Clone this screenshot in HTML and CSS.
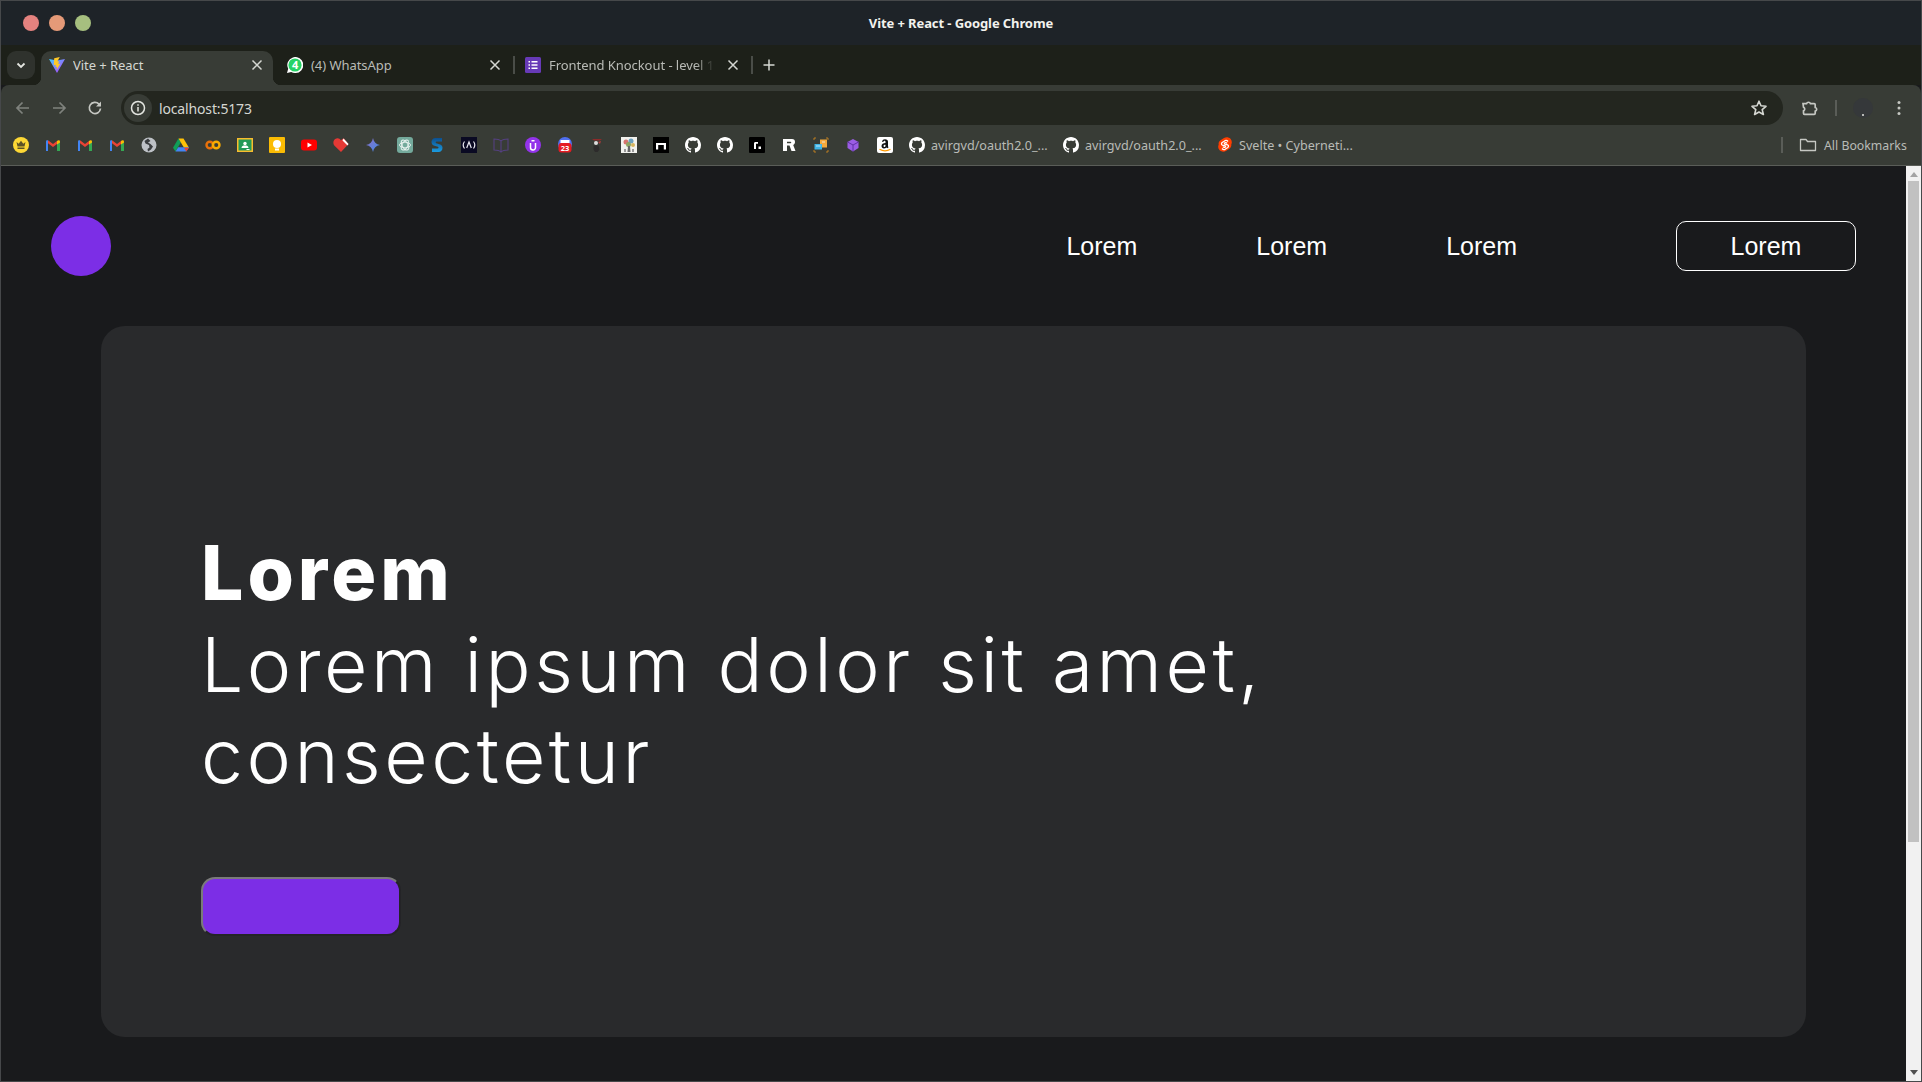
FILE: index.html
```html
<!DOCTYPE html>
<html lang="en">
<head>
<meta charset="utf-8">
<title>Vite + React</title>
<link rel="stylesheet" href="styles.css">
</head>
<body>
<svg class="defs" width="0" height="0" aria-hidden="true">
  <symbol id="gh" viewBox="0 0 16 16"><path fill="#fff" d="M8 0C3.58 0 0 3.58 0 8c0 3.54 2.29 6.53 5.47 7.59.4.07.55-.17.55-.38 0-.19-.01-.82-.01-1.49-2.01.37-2.53-.49-2.69-.94-.09-.23-.48-.94-.82-1.13-.28-.15-.68-.52-.01-.53.63-.01 1.08.58 1.23.82.72 1.21 1.87.87 2.33.66.07-.52.28-.87.51-1.07-1.78-.2-3.64-.89-3.64-3.95 0-.87.31-1.59.82-2.15-.08-.2-.36-1.02.08-2.12 0 0 .67-.21 2.2.82.64-.18 1.32-.27 2-.27.68 0 1.36.09 2 .27 1.53-1.04 2.2-.82 2.2-.82.44 1.1.16 1.92.08 2.12.51.56.82 1.27.82 2.15 0 3.07-1.87 3.75-3.65 3.95.29.25.54.73.54 1.48 0 1.07-.01 1.93-.01 2.2 0 .21.15.46.55.38A8.013 8.013 0 0016 8c0-4.42-3.58-8-8-8z"/></symbol>
  <symbol id="gm" viewBox="0 0 16 16">
    <path fill="#4285f4" d="M1 14V4.200c0-.5.8-1.400 2-.9v10.700z"/><path fill="#34a853" d="M12 14V6.500l3-2V14z"/>
    <path fill="#ea4335" d="M3 3.300l5 3.800 4-3v2.900L8 9.900 3 6.200z"/><path fill="#fbbc04" d="M12 4.100c1.300-1.300 3-.7 3 .5v.9l-3 2z"/>
  </symbol>
  <symbol id="x" viewBox="0 0 16 16"><path d="M3.500 3.500l9 9m0-9l-9 9" fill="none" stroke="#d5d7d2" stroke-width="1.500"/></symbol>
</svg>
<div class="window">
  <header class="titlebar">
    <div class="lights"><span class="light red"></span><span class="light orange"></span><span class="light green"></span></div>
    <div class="wintitle">Vite + React - Google Chrome</div>
    <div></div>
  </header>

  <div class="tabstrip">
    <div class="tabsearch"><svg class="i12" viewBox="0 0 12 12"><path d="M2.500 4.500L6 8l3.500-3.500" fill="none" stroke="#e3e5e0" stroke-width="1.800"/></svg></div>
    <div class="tab active">
      <svg class="i16" viewBox="0 0 16 16"><defs><linearGradient id="vp" x1="0" y1="0" x2="1" y2="1"><stop offset="0" stop-color="#41d1ff"/><stop offset="1" stop-color="#bd34fe"/></linearGradient></defs><path fill="url(#vp)" d="M0 2l8 1.400L16 2 8 16z"/><path fill="#ffc928" d="M10.800 0L5.200 1.200l-.4 7 2-.4-.3 2.200 1.500-.3-.4 3.300 3.800-6.500-2.200.4.900-2.700-1.800.3z"/></svg>
      <span class="tabtitle">Vite + React</span>
      <svg class="i16" viewBox="0 0 16 16"><use href="#x"/></svg>
    </div>
    <span class="tabsep clear"></span>
    <div class="tab">
      <svg class="i16" viewBox="0 0 16 16"><path fill="#fff" d="M0 16l1.200-4.300A8 8 0 118 16a8 8 0 01-3.800-1z"/><circle cx="8" cy="8" r="6.600" fill="#25d366"/><text x="8" y="12" class="wa">4</text></svg>
      <span class="tabtitle">(4) WhatsApp</span>
      <svg class="i16" viewBox="0 0 16 16"><use href="#x"/></svg>
    </div>
    <span class="tabsep"></span>
    <div class="tab">
      <svg class="i16" viewBox="0 0 16 16"><rect width="16" height="16" rx="1.500" fill="#673ab7"/><path d="M3.500 4h1.500v1.500H3.500zm0 3.300h1.500v1.500H3.500zm0 3.200h1.500V12H3.500zM6.500 4h6v1.500h-6zm0 3.300h6v1.500h-6zm0 3.200h6V12h-6z" fill="#fff"/></svg>
      <span class="tabtitle fade">Frontend Knockout - level 1 (</span>
      <svg class="i16" viewBox="0 0 16 16"><use href="#x"/></svg>
    </div>
    <span class="tabsep"></span>
    <svg class="i16 newtab" viewBox="0 0 16 16"><path d="M8 2.500v11M2.500 8h11" stroke="#d5d7d2" stroke-width="1.500" fill="none"/></svg>
  </div>

  <div class="toolbar">
    <svg class="i18" viewBox="0 0 18 18"><path d="M15 9H3.500M8.500 3.500L3 9l5.500 5.500" fill="none" stroke="#7f827d" stroke-width="1.700"/></svg>
    <svg class="i18" viewBox="0 0 18 18"><path d="M3 9h11.500M9.500 3.500L15 9l-5.500 5.500" fill="none" stroke="#7f827d" stroke-width="1.700"/></svg>
    <svg class="i18" viewBox="0 0 18 18"><path d="M14.500 9.500a5.600 5.600 0 11-1.500-4.400l1.500 1.500" fill="none" stroke="#c6c8c3" stroke-width="1.700"/><path d="M15 2.500V7.500H10z" fill="#c6c8c3"/></svg>
    <div class="omnibox">
      <span class="siteinfo"><svg class="i16" viewBox="0 0 16 16"><circle cx="8" cy="8" r="6.500" fill="none" stroke="#e3e5e0" stroke-width="1.500"/><path d="M8 7v4.500M8 4.300v1.500" stroke="#e3e5e0" stroke-width="1.500"/></svg></span>
      <span class="url">localhost:5173</span>
      <svg class="i18" viewBox="0 0 18 18"><path d="M9 2.200l2 4.600 5 .5-3.800 3.300 1.200 4.900L9 13l-4.400 2.500 1.200-4.900L2 7.300l5-.5z" fill="none" stroke="#d5d7d2" stroke-width="1.600" stroke-linejoin="round"/></svg>
    </div>
    <svg class="i18 puzzle" viewBox="0 0 18 18"><path d="M3 4.700h3.500a2.100 2.100 0 014 0h3.700a1 1 0 011 1v2.800a1.900 1.900 0 010 3.700v2.100a1 1 0 01-1 1H4.500a1 1 0 01-1-1v-2.400a2 2 0 000-3.700z" fill="none" stroke="#c6c8c3" stroke-width="1.700"/></svg>
    <span class="toolsep"></span>
    <span class="avatar"><span class="avatardot"></span></span>
    <svg class="dots" viewBox="0 0 4 16"><circle cx="2" cy="2.500" r="1.500"/><circle cx="2" cy="8" r="1.500"/><circle cx="2" cy="13.500" r="1.500"/></svg>
  </div>

  <nav class="bookmarks">
    <svg class="i16" viewBox="0 0 16 16"><circle cx="8" cy="8" r="8" fill="#fdd835"/><path d="M3.500 5l2.200 1.700L8 3.800l2.300 2.900L12.500 5l-1 4.500h-7zM4.500 10.500h7V12h-7z" fill="#5d5326"/></svg>
    <svg class="i16" viewBox="0 0 16 16"><use href="#gm"/></svg>
    <svg class="i16" viewBox="0 0 16 16"><use href="#gm"/></svg>
    <svg class="i16" viewBox="0 0 16 16"><use href="#gm"/></svg>
    <svg class="i16" viewBox="0 0 16 16"><circle cx="8" cy="8" r="7.500" fill="#bdc1c6"/><path d="M7 1.500L3.500 4l1 2.500L8 8l.5 2.500-2 1.500.5 2.500 3-2 2-3-2.500-2.500L7 5.500 9.500 4z" fill="#3a3d3f"/></svg>
    <svg class="i16" viewBox="0 0 16 16"><path fill="#0f9d58" d="M5.400 1.500L0 10.700l2.500 3.800 5.400-9.300z"/><path fill="#ffc107" d="M5.500 1.500h5l5.500 9.200h-5z"/><path fill="#4285f4" d="M2.500 14.500l2.700-4.300h10.800l-2.700 4.300z"/><path fill="#ea4335" d="M16 10.700l-2.700 3.800-2.300-3.800z"/></svg>
    <svg class="i16" viewBox="0 0 16 16"><g fill="none" stroke-width="2.400"><circle cx="4.800" cy="8" r="3.300" stroke="#e8710a"/><circle cx="11.200" cy="8" r="3.300" stroke="#f9ab00"/></g></svg>
    <svg class="i16" viewBox="0 0 16 16"><rect y="1" width="16" height="14" fill="#f9bd2d"/><rect x="1.500" y="2.500" width="13" height="11" fill="#249a58"/><circle cx="8" cy="6.500" r="1.700" fill="#fff"/><path d="M4.500 11c0-2 1.500-2.500 3.500-2.500s3.500.5 3.500 2.500zM9.500 12h3v1h-3z" fill="#fff"/></svg>
    <svg class="i16" viewBox="0 0 16 16"><rect width="16" height="16" rx="1" fill="#fbbc04"/><circle cx="8" cy="7" r="4" fill="#fff"/><rect x="6" y="11.500" width="4" height="2" fill="#fff"/></svg>
    <svg class="i16" viewBox="0 0 16 16"><rect y="2.500" width="16" height="11" rx="3" fill="#f00"/><path d="M6.500 5.500L11 8l-4.500 2.500z" fill="#fff"/></svg>
    <svg class="i16" viewBox="0 0 16 16"><path d="M8 15L1.300 8.500C-.5 6.500.3 2 3.500 1.500 5.500 1 7 2 8 3.500 9 2 10 1.500 11 1.500l4.500 5.500z" fill="#e53935"/><path d="M10.500 1.500l5 5.500-1 1.500-5-5z" fill="#fff"/></svg>
    <svg class="i16" viewBox="0 0 16 16"><defs><linearGradient id="gem" x1="0" y1="0" x2="1" y2="1"><stop offset="0" stop-color="#8e6fc9"/><stop offset="1" stop-color="#3f8ce8"/></linearGradient></defs><path d="M8 1c.8 4 3 6.200 7 7-4 .8-6.200 3-7 7-.8-4-3-6.200-7-7 4-.8 6.200-3 7-7z" fill="url(#gem)"/></svg>
    <svg class="i16" viewBox="0 0 16 16"><rect width="16" height="16" rx="3" fill="#74aa9c"/><g fill="none" stroke="#e8f2ef" stroke-width=".9"><ellipse cx="8" cy="8" rx="5.500" ry="2.800"/><ellipse cx="8" cy="8" rx="5.500" ry="2.800" transform="rotate(60 8 8)"/><ellipse cx="8" cy="8" rx="5.500" ry="2.800" transform="rotate(120 8 8)"/></g></svg>
    <svg class="i16" viewBox="0 0 16 16"><defs><linearGradient id="sb" x1="0" y1="0" x2="0" y2="1"><stop offset="0" stop-color="#0c4f8f"/><stop offset="1" stop-color="#1a9be0"/></linearGradient></defs><path d="M13 1H6.500C4 1 2.500 2.800 2.500 5c0 2 1.200 3.200 3 3.700l3.500 1c.8.300.8 1.800-.5 1.800H3V15h6.500c2.500 0 4-1.800 4-4.200 0-2-1.200-3.100-3-3.600l-3.300-1c-.8-.3-.7-1.700.4-1.700H13z" fill="url(#sb)"/></svg>
    <svg class="i16" viewBox="0 0 16 16"><rect width="16" height="16" fill="#0a0a23"/><path d="M3.500 4.500C2 6.500 2 9.500 3.500 11.500M12.500 4.500c1.500 2 1.500 5 0 7M5.700 11L8 5l2.300 6" fill="none" stroke="#e8e8f0" stroke-width="1.200"/></svg>
    <svg class="i16" viewBox="0 0 16 16"><path d="M8 4C6.500 2.500 4 2 1 2v11c3 0 5.500.5 7 2 1.500-1.500 4-2 7-2V2c-3 0-5.500.5-7 2zm0 0v11" fill="none" stroke="#54407f" stroke-width="1.100"/></svg>
    <svg class="i16" viewBox="0 0 16 16"><circle cx="8" cy="8" r="8" fill="#9333ea"/><path d="M5.500 6v4.500a2.500 2.500 0 005 0V6M6.500 3.700h3" fill="none" stroke="#fff" stroke-width="1.500"/></svg>
    <svg class="i16" viewBox="0 0 16 16"><circle cx="8" cy="7" r="7" fill="#4f6ff0"/><rect x="3.500" y="3" width="9" height="3" fill="#fff"/><rect x="1.500" y="6" width="13" height="9.500" rx="3" fill="#e51c23"/><text x="8" y="14" class="cal">23</text></svg>
    <svg class="i16" viewBox="0 0 16 16"><path d="M3 2h10l-2 1.500H5z" fill="#8e2a2a"/><circle cx="7" cy="6" r="2" fill="#ddd"/><path d="M4.500 8.500h5l1 4-2 2.500H6l-1.500-2.500z" fill="#2d2b2b"/><path d="M9 5l3-1-1 3z" fill="#b13a3a"/></svg>
    <svg class="i16" viewBox="0 0 16 16"><rect width="16" height="16" fill="#f2f2ee"/><circle cx="5" cy="5" r="2.500" fill="#d7746e"/><circle cx="10" cy="4" r="2.500" fill="#6ba0bf"/><circle cx="7.500" cy="7.500" r="2.500" fill="#8da565"/><circle cx="12" cy="8" r="2" fill="#d7b55e"/><path d="M7 9h2l.5 6h-3z" fill="#666"/><path d="M3 12h2v3H3zM11 12h2v3h-2z" fill="#999"/></svg>
    <svg class="i16" viewBox="0 0 16 16"><rect width="16" height="16" fill="#000"/><path d="M3 6h10v6.500h-2.200V8H5.200v4.500H3z" fill="#fff"/></svg>
    <svg class="i16" viewBox="0 0 16 16"><use href="#gh"/></svg>
    <svg class="i16" viewBox="0 0 16 16"><use href="#gh"/></svg>
    <svg class="i16" viewBox="0 0 16 16"><rect width="16" height="16" rx="1" fill="#000"/><path d="M5 12V6.500C5 5.500 5.700 5 6.500 5H9v1.800H7V12z" fill="#fff"/><rect x="9.500" y="9.500" width="2.500" height="2.500" fill="#fff"/></svg>
    <svg class="i16" viewBox="0 0 16 16"><path fill-rule="evenodd" d="M2 2h9c2 0 3 1.300 3 3 0 1.500-.7 2.500-1.800 2.900L14.500 14h-4l-2-5.500H6V14H2zm4 2.800v1.500h3.500c1 0 1-1.500 0-1.500z" fill="#fff"/></svg>
    <svg class="i16" viewBox="0 0 16 16"><path d="M1 3V1h2M13 1h2v2M1 13v2h2M15 13v2h-2" fill="none" stroke="#d88a1c" stroke-width=".8"/><rect x="7" y="2.500" width="7" height="8" fill="#f4a93b"/><rect x="1.500" y="7" width="7.500" height="5.500" fill="#3fb5e8"/><path d="M3 9h4.500M9 5h3" stroke="#eaf6fb" stroke-width=".8"/></svg>
    <svg class="i16" viewBox="0 0 16 16"><path d="M8 2l5.500 3v6L8 14.500 2.500 11V5z" fill="#9b5de5"/><path d="M2.500 5L8 8l5.500-3M8 8v6.500" fill="none" stroke="#5a2ca0" stroke-width=".9"/></svg>
    <svg class="i16" viewBox="0 0 16 16"><rect width="16" height="16" rx="2" fill="#fff"/><path d="M5 4.700C5.300 3 6.500 2.200 8 2.200c2 0 3 1 3 2.500V9c0 .5.300.9.600 1.200L10.300 11.300 9.500 10.500c-.8.700-1.600 1-2.500 1-1.500 0-2.500-1-2.500-2.500 0-2 1.800-3 4-3V5c0-.8-.4-1.200-1-1.200s-1 .4-1.200 1.100zm3.500 3c-1.300 0-2 .5-2 1.300 0 .6.300 1 .9 1 .6 0 1.100-.5 1.100-1.300z" fill="#111"/><path d="M2.500 12.300c3.500 2 7.500 2 11 0" fill="none" stroke="#f90" stroke-width="1.100"/></svg>
    <span class="chip"><svg class="i16" viewBox="0 0 16 16"><use href="#gh"/></svg><span>avirgvd/oauth2.0_...</span></span>
    <span class="chip wide"><svg class="i16" viewBox="0 0 16 16"><use href="#gh"/></svg><span>avirgvd/oauth2.0_...</span></span>
    <span class="chip last"><svg class="i16" viewBox="0 0 16 16"><path d="M13.500 1.700c-1.800-1.700-4.500-2-6.500-.7L3.500 3.200C2 4.200 1.300 6 1.700 7.700c-.8 1.500-.7 3.500.4 4.900 1.500 2.200 4.500 2.800 6.800 1.400l3.500-2.200c1.500-1 2.200-2.800 1.900-4.500.9-1.700.7-3.700-.8-5.600z" fill="#ff3e00"/><path d="M11 4.500c-.8-1-2-1.300-3-.8L5.200 5.500c-1 .7-1 2.200.2 2.700l2.700.7c.8.300.6 1.300-.3 1.500-.8.200-1.500-.2-1.900-.8M5 11.500c.9 1 2.100 1.300 3.100.8l2.700-1.800c1-.7 1-2.200-.2-2.700l-2.700-.7c-.8-.3-.6-1.300.3-1.500.8-.2 1.500.2 1.900.8" fill="none" stroke="#fff" stroke-width="1.300"/></svg><span>Svelte • Cyberneti...</span></span>
    <span class="booksep"></span>
    <svg class="i18" viewBox="0 0 18 18"><path d="M1.500 3.500h5.500l1.500 2h8v9h-15z" fill="none" stroke="#c6c8c3" stroke-width="1.300" stroke-linejoin="round"/></svg>
    <span class="allbm">All Bookmarks</span>
  </nav>

  <div class="viewport">
    <main class="page">
      <div class="topnav">
        <span class="logo"></span>
        <div class="navlinks">
          <a class="navlink">Lorem</a>
          <a class="navlink">Lorem</a>
          <a class="navlink">Lorem</a>
          <button class="navbtn">Lorem</button>
        </div>
      </div>
      <section class="hero">
        <h1 class="headline"><strong class="headstrong">Lorem</strong><br>Lorem ipsum dolor sit amet,<br>consectetur</h1>
        <button class="cta"></button>
      </section>
    </main>
    <aside class="scrollbar">
      <span class="arrow up"></span>
      <span class="thumb"></span>
      <span class="track"></span>
      <span class="arrow down"></span>
    </aside>
  </div>
</div>
</body>
</html>
```
FILE: styles.css
```css
* { box-sizing: border-box; }
html, body { margin: 0; padding: 0; }
body { width: 1922px; height: 1082px; overflow: hidden; background: #46484a; padding: 1px; font-family: "Noto Sans", sans-serif; }
.defs { display: block; height: 0; }
.window { display: flex; flex-direction: column; width: 1920px; height: 1080px; background: #191a1c; }
.i12 { width: 12px; height: 12px; display: block; flex: none; }
.i16 { width: 16px; height: 16px; display: block; flex: none; }
.i18 { width: 18px; height: 18px; display: block; flex: none; }

.titlebar { height: 44px; flex: none; background: #1e2328; display: grid; grid-template-columns: 1fr auto 1fr; align-items: center; }
.lights { display: flex; gap: 10px; padding-left: 22px; }
.light { width: 16px; height: 16px; border-radius: 50%; }
.red { background: #e5827f; }
.orange { background: #e59a78; }
.green { background: #a6bf7f; }
.wintitle { color: #f2f2ee; font-size: 13px; font-weight: 700; letter-spacing: -.1px; }

.tabstrip { height: 40px; flex: none; background: #1d2019; padding: 6px 0 0 6px; display: flex; align-items: flex-start; }
.tabsearch { width: 28px; height: 28px; background: #2f322d; border-radius: 9px; margin-right: 6px; display: flex; align-items: center; justify-content: center; }
.tab { width: 232px; height: 34px; display: flex; align-items: center; gap: 8px; padding: 0 8px 6px 8px; color: #b9bbb6; font-size: 13px; letter-spacing: -.05px; border-radius: 10px 10px 0 0; }
.tab.active { background: #383c36; color: #d5d7d2; position: relative; }
.tab.active::before, .tab.active::after { content: ""; position: absolute; bottom: 0; width: 8px; height: 8px; }
.tab.active::before { left: -8px; background: radial-gradient(circle at 0 0, transparent 8px, #383c36 8.5px); }
.tab.active::after { right: -8px; background: radial-gradient(circle at 100% 0, transparent 8px, #383c36 8.5px); }
.tabtitle { flex: 1; white-space: nowrap; overflow: hidden; }
.fade { margin-right: 2px; -webkit-mask-image: linear-gradient(90deg, #000 88%, transparent 100%); mask-image: linear-gradient(90deg, #000 88%, transparent 100%); }
.wa { font: 700 11px "Noto Sans", sans-serif; fill: #fff; text-anchor: middle; }
.cal { font: 700 7.500px "Noto Sans", sans-serif; fill: #fff; text-anchor: middle; }
.tabsep { width: 2px; height: 18px; margin: 5px 2px 0; background: #4a4d48; flex: none; }
.tabsep.clear { background: transparent; }
.newtab { margin: 6px 0 0 6px; }

.toolbar { height: 40px; flex: none; background: #383c36; border-radius: 8px 8px 0 0; padding: 6px 20px 0 13px; display: flex; align-items: center; gap: 18px; }
.omnibox { flex: 1; height: 34px; background: #23261f; border-radius: 17px; margin-left: -1px; padding: 0 15px 0 3px; display: flex; align-items: center; gap: 7px; color: #d5d7d2; font-size: 14px; letter-spacing: -.15px; }
.siteinfo { width: 28px; height: 28px; border-radius: 50%; background: #383c36; display: flex; align-items: center; justify-content: center; }
.url { flex: 1; }
.puzzle { margin-left: -1px; }
.toolsep { width: 2px; height: 16px; background: #5a5d58; flex: none; margin-left: -1px; }
.avatar { width: 20px; height: 20px; border-radius: 50%; background: #35383a; margin-left: -2px; display: flex; align-items: flex-end; justify-content: center; padding-bottom: 2px; }
.avatardot { width: 2px; height: 2px; background: #e3e5e0; border-radius: 50%; }
.dots { width: 4px; height: 16px; fill: #c6c8c3; margin-left: 6px; flex: none; }

.bookmarks { height: 41px; flex: none; background: #383c36; border-bottom: 1px solid #5a5d58; padding: 0 15px 0 12px; display: flex; align-items: center; gap: 16px; }
.chip { display: flex; align-items: center; gap: 6px; color: #b9bbb6; font-size: 12.600px; white-space: nowrap; width: 138px; }
.chip.wide { width: 138px; }
.chip.last { width: 127px; }
.booksep { width: 2px; height: 16px; background: #5a5d58; margin-left: auto; flex: none; }
.allbm { color: #b9bbb6; font-size: 12.300px; white-space: nowrap; margin-left: -9px; width: 82px; }

.viewport { flex: 1; display: flex; min-height: 0; }
.page { flex: 1; min-width: 0; background: #191a1c; }
.topnav { display: flex; align-items: center; justify-content: space-between; padding: 50px; }
.logo { width: 60px; height: 60px; border-radius: 50%; background: #7c2ee6; }
.navlinks { display: flex; align-items: center; gap: 119px; }
.navlink { color: #fff; font: 25px "Liberation Sans", sans-serif; }
.navbtn { width: 180px; height: 50px; margin-left: 40px; background: transparent; border: 1.500px solid #fff; border-radius: 10px; color: #fff; font: 25px "Liberation Sans", sans-serif; }
.hero { margin: 0 100px; height: 711px; background: #292a2c; border-radius: 24px; padding: 201px 100px 0; }
.headline { margin: 0; color: #fff; font: 300 75px/91.500px "Inter", sans-serif; letter-spacing: 3.500px; }
.headstrong { font-weight: 800; letter-spacing: 4px; }
.cta { display: block; width: 200px; height: 59px; margin-top: 75.500px; background: #7c2ee6; border: 2px solid; border-color: #7a7a7a #242427 #242427 #7a7a7a; border-radius: 14px; }

.scrollbar { width: 15px; flex: none; background: #f1f1f1; display: flex; flex-direction: column; align-items: center; }
.arrow { width: 0; height: 0; border-left: 4px solid transparent; border-right: 4px solid transparent; flex: none; }
.arrow.up { border-bottom: 5px solid #a3a3a3; margin: 6px 0 4px; }
.arrow.down { border-top: 5px solid #505050; margin: 4px 0 6px; }
.thumb { width: 11px; height: 661px; background: #c1c1c1; flex: none; }
.track { flex: 1; }
```
